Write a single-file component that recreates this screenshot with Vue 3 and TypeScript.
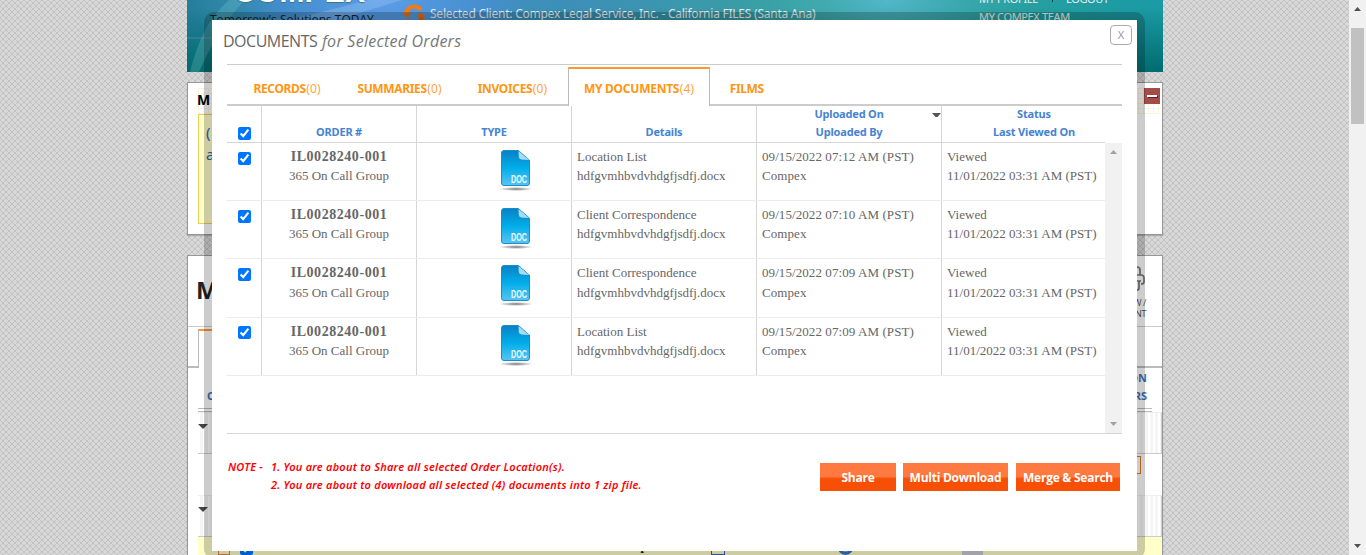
<script setup lang="ts">
import { ref } from 'vue'

interface DocumentRow {
  order: string
  client: string
  kind: string
  file: string
  uploadedOn: string
  uploadedBy: string
  status: string
  viewedOn: string
  selected: boolean
}

const tabs = [
  { label: 'RECORDS', count: '(0)', name: 'records' },
  { label: 'SUMMARIES', count: '(0)', name: 'summaries' },
  { label: 'INVOICES', count: '(0)', name: 'invoices' },
  { label: 'MY DOCUMENTS', count: '(4)', name: 'mine' },
  { label: 'FILMS', count: '', name: 'films' },
]
const activeTab = ref('mine')
const allSelected = ref(true)

const makeRow = (kind: string, time: string): DocumentRow => ({
  order: 'IL0028240-001',
  client: '365 On Call Group',
  kind,
  file: 'hdfgvmhbvdvhdgfjsdfj.docx',
  uploadedOn: `09/15/2022 ${time} AM (PST)`,
  uploadedBy: 'Compex',
  status: 'Viewed',
  viewedOn: '11/01/2022 03:31 AM (PST)',
  selected: true,
})

const rows = ref<DocumentRow[]>([
  makeRow('Location List', '07:12'),
  makeRow('Client Correspondence', '07:10'),
  makeRow('Client Correspondence', '07:09'),
  makeRow('Location List', '07:09'),
])
</script>

<template>
  <div class="screen">
    <div class="viewport">
      <svg class="weave" width="1349" height="555" shape-rendering="crispEdges">
        <defs>
          <pattern id="weave" width="6" height="6" patternUnits="userSpaceOnUse">
            <rect width="6" height="6" fill="#d8d8d8" />
            <path d="M0 0h1v1h-1zM1 1h1v1h-1zM2 2h1v1h-1zM3 3h1v1h-1zM4 4h1v1h-1zM5 5h1v1h-1zM5 0h1v1h-1zM4 1h1v1h-1zM3 2h1v1h-1zM2 3h1v1h-1zM1 4h1v1h-1zM0 5h1v1h-1z" fill="#c2c2c2" />
          </pattern>
        </defs>
        <rect width="1349" height="555" fill="url(#weave)" />
      </svg>
      <div class="site">
        <header class="banner">
          <svg class="banner-art" viewBox="0 0 976 72" preserveAspectRatio="none">
            <defs>
              <radialGradient id="glow" cx="0.5" cy="0.5" r="0.5">
                <stop offset="0" stop-color="#5d9ee8" />
                <stop offset="0.55" stop-color="#4a90d9" stop-opacity="0.75" />
                <stop offset="1" stop-color="#3a9ab5" stop-opacity="0" />
              </radialGradient>
              <radialGradient id="haze" cx="0.5" cy="0.5" r="0.5">
                <stop offset="0" stop-color="#54b7cb" />
                <stop offset="1" stop-color="#3aa5ae" stop-opacity="0" />
              </radialGradient>
            </defs>
            <ellipse cx="195" cy="0" rx="190" ry="90" fill="url(#glow)" />
            <ellipse cx="700" cy="0" rx="150" ry="60" fill="url(#haze)" />
            <path d="M3 72 C12 38 22 18 42 0 L58 0 C38 20 24 45 12 72Z" fill="#7fd0c8" opacity=".25" />
            <path d="M110 18 L182 0 L215 0 L150 20Z" fill="#b9d6fb" opacity=".25" />
            <path d="M0 38 H25" stroke="#6e8fb4" opacity=".6" />
          </svg>
          <div class="brand">
            <div class="logo">COMPEX</div>
            <div class="tagline">Tomorrow's Solutions TODAY</div>
          </div>
          <div class="client">
            <svg width="24" height="24" viewBox="0 0 24 24">
              <path d="M4 10 A8.5 8.5 0 0 1 19 7" fill="none" stroke="#f47a14" stroke-width="4" />
              <path d="M20 14 A8.5 8.5 0 0 1 5 17" fill="none" stroke="#d96205" stroke-width="4" />
              <path d="M0 10 H10 L5 15Z M14 14 H24 L19 9Z" fill="#e66c0b" />
            </svg>
            <span>Selected Client: Compex Legal Service, Inc. - California FILES (Santa Ana)</span>
          </div>
          <nav class="account">
            <div class="account-row"><span>MY PROFILE</span><i></i><span>LOGOUT</span></div>
            <div>MY COMPEX TEAM</div>
          </nav>
        </header>

        <section class="panel notice">
          <div class="notice-head"><b>M</b><span class="collapse"><i></i></span></div>
          <div class="notice-box">(<br />a</div>
        </section>

        <section class="panel orders">
          <div class="orders-head">
            <b>M</b>
            <div class="print">
              <svg width="22" height="26" viewBox="0 0 22 26" fill="none" stroke="#777" stroke-width="1.7">
                <path d="M5 9 V3 Q5 1 7 1 H13 Q16 1 16 4 V9 M5 19 H3 Q1 19 1 17 V11 Q1 9 3 9 H17 Q20 9 20 12 V16 Q20 18 17 18 M5 15 H17 M6 15 V22 Q6 24 8 24 H13 Q15 24 15 22 V15" />
              </svg>
              <span>W /<br />NT</span>
            </div>
          </div>
          <div class="orders-tabs"><i></i></div>
          <div class="orders-cols"><span>O</span><span class="right">ON<br />RS</span></div>
          <div class="group"><i></i></div>
          <div class="group-body"><i></i></div>
          <div class="group"><i></i></div>
          <div class="picked">
            <span class="mini-icon"></span>
            <input type="checkbox" checked />
            <span class="p-no">365</span>
            <b class="p-type">Test</b>
            <b class="p-client">365 On Call Group</b>
            <span class="p-copy"></span>
            <span class="p-ring"></span>
            <span class="p-gray"></span>
          </div>
        </section>
      </div>
    </div>

    <div class="page-scroll">
      <svg width="17" height="28" viewBox="0 0 17 28"><path d="M5 11 L8.5 7 L12 11Z" fill="#505050" /></svg>
      <div class="thumb"></div>
      <svg class="down" width="17" height="17" viewBox="0 0 17 17"><path d="M5 6 L8.5 10 L12 6Z" fill="#505050" /></svg>
    </div>

    <div class="frame">
      <div class="dialog">
        <header class="title-bar">
          <h1>DOCUMENTS <em>for Selected Orders</em></h1>
          <button class="close">X</button>
        </header>

        <div class="content">
          <nav class="tabs">
            <button
              v-for="tab in tabs"
              :key="tab.name"
              :class="['tab', tab.name, { active: activeTab === tab.name }]"
              @click="activeTab = tab.name"
            ><b>{{ tab.label }}</b><span>{{ tab.count }}</span></button>
            <div class="tab-rest"></div>
          </nav>

          <div class="grid head">
            <div class="check"><input v-model="allSelected" type="checkbox" /></div>
            <div><span>ORDER #</span></div>
            <div><span>TYPE</span></div>
            <div><span>Details</span></div>
            <div class="sorted">
              <span>Uploaded On<br />Uploaded By</span>
              <svg width="9" height="6" viewBox="0 0 9 6"><path d="M0 1 H9 L5.5 5 H3.5Z" fill="#555" /></svg>
            </div>
            <div class="status-head"><span>Status<br />Last Viewed On</span></div>
          </div>

          <div class="body">
            <div class="rows">
              <div v-for="(row, i) in rows" :key="i" class="grid row">
                <div class="check"><input v-model="row.selected" type="checkbox" /></div>
                <div class="order"><b>{{ row.order }}</b><span>{{ row.client }}</span></div>
                <div class="type">
                  <svg width="36" height="42" viewBox="0 0 36 42">
                    <defs>
                      <linearGradient id="page" x1="0" y1="0" x2="0" y2="1">
                        <stop offset="0" stop-color="#0a7fc4" />
                        <stop offset="0.5" stop-color="#00aeea" />
                        <stop offset="1" stop-color="#5cc3f2" />
                      </linearGradient>
                      <radialGradient id="shade"><stop offset="0" stop-color="#777" /><stop offset="1" stop-color="#777" stop-opacity="0" /></radialGradient>
                    </defs>
                    <ellipse cx="18" cy="39" rx="17" ry="2" fill="url(#shade)" />
                    <path d="M6 .5 H20.5 L31.5 10 V33 Q31.5 35.5 29 35.5 H6 Q3.5 35.5 3.5 33 V3 Q3.5 .5 6 .5Z" fill="url(#page)" stroke="#168fce" />
                    <path d="M20.5 1 L31 10 Q27 9.5 23.5 9.5 Q21 9 20.8 7Z" fill="#a6dcf5" />
                    <path d="M20.8 0 L32 10 V0Z" fill="#fff" />
                    <text x="13" y="33" textLength="16" lengthAdjust="spacingAndGlyphs" class="doc-label">DOC</text>
                  </svg>
                </div>
                <div class="details"><span>{{ row.kind }}</span><span class="file">{{ row.file }}</span></div>
                <div class="uploaded"><span>{{ row.uploadedOn }}</span><span>{{ row.uploadedBy }}</span></div>
                <div class="status"><span>{{ row.status }}</span><span>{{ row.viewedOn }}</span></div>
              </div>
            </div>
            <div class="list-scroll">
              <svg width="17" height="17" viewBox="0 0 17 17"><path d="M5 11 L8.5 7 L12 11Z" fill="#a3a3a3" /></svg>
              <svg width="17" height="17" viewBox="0 0 17 17"><path d="M5 6 L8.5 10 L12 6Z" fill="#a3a3a3" /></svg>
            </div>
          </div>

          <footer class="footer">
            <div class="note">
              <span class="note-label">NOTE -</span>
              <div><div>1. You are about to Share all selected Order Location(s).</div><div>2. You are about to download all selected (4) documents into 1 zip file.</div></div>
            </div>
            <div class="actions">
              <button class="share">Share</button>
              <button class="multi">Multi Download</button>
              <button class="merge">Merge &amp; Search</button>
            </div>
          </footer>
        </div>
      </div>
    </div>
  </div>
</template>

<style>
body { overflow: hidden; }
</style>

<style scoped>
* { box-sizing: border-box; }
button { border: 0; padding: 0; margin: 0; background: none; font-family: inherit; }
input { width: 13px; height: 13px; margin: 0; display: block; flex: none; }
.screen { position: relative; width: 1366px; height: 555px; overflow: hidden; display: flex; font-family: "Noto Sans", "Open Sans", sans-serif; }
.viewport { position: relative; width: 1349px; height: 555px; overflow: hidden; background: #d0d0d0; }
.weave { position: absolute; inset: 0; }
.site { position: relative; width: 976px; margin-left: 187px; }
.banner { position: relative; height: 72px; overflow: hidden; background: linear-gradient(180deg, rgba(0,110,110,0) 10%, rgba(0,105,108,.9) 95%), linear-gradient(90deg, #257f9c, #3d8fb8 40%, #36a69a 68%, #1a9aa5); }
.banner-art { position: absolute; inset: 0; width: 976px; height: 72px; }
.brand { position: absolute; left: 23px; top: -25px; white-space: nowrap; }
.logo { color: #fff; font: bold 30px/34px "Liberation Sans", sans-serif; height: 36px; letter-spacing: .2px; margin-left: 24px; text-shadow: 0 1px 1px #3b7482; }
.tagline { font: 12px/18px "Open Sans", sans-serif; color: #0c1c28; letter-spacing: 0; }
.client { position: absolute; left: 215px; top: 3px; display: flex; gap: 4px; color: #e2eaec; font-size: 12px; line-height: 22px; white-space: nowrap; letter-spacing: -.24px; }
.account { position: absolute; left: 792px; top: -10px; color: #e7eeee; font-size: 11px; line-height: 18px; letter-spacing: -.35px; white-space: nowrap; }
.account-row { display: flex; }
.account-row i { width: 1px; height: 12px; background: #063b40; margin: 0 13px 0 14px; }
.panel { background: #fff; border: 1px solid #999; box-shadow: 0 1px 1px #aaa; }
.notice { margin-top: 10px; height: 153px; padding: 5px 2px 0 10px; background: #fff; }
.notice-head { display: flex; justify-content: space-between; height: 26px; font: 14px/24px "Noto Sans", sans-serif; color: #000; background: repeating-linear-gradient(0deg, #fdf3df 0 1px, transparent 1px 5px), repeating-linear-gradient(90deg, #fdf3df 0 1px, transparent 1px 5px); }
.notice-head b { margin-left: -1px; }
.collapse { width: 16px; height: 16px; background: #a54c49; padding: 7px 3px; }
.collapse i { display: block; height: 2px; background: #fff; box-shadow: 1px 1px #5b2220; }
.notice-box { width: 500px; height: 110px; background: #ffffc8; border: 1px solid #eecd5c; padding: 6px 7px; color: #2e62aa; font-size: 15px; line-height: 22px; }
.orders { margin-top: 20px; height: 310px; overflow: hidden; }
.orders-head { height: 71px; display: flex; justify-content: space-between; padding: 10px 16px 0 8px; border-bottom: 1px solid #ccc; color: #222; font: 24px/48px "Open Sans", sans-serif; }
.print { width: 22px; font-size: 9px; line-height: 11px; text-align: right; color: #555; letter-spacing: -.4px; white-space: nowrap; }
.print svg { display: block; margin-bottom: 5px; }
.orders-tabs { height: 41px; display: flex; border-bottom: 2px solid #bbb; padding-top: 2px; padding-left: 10px; }
.orders-tabs i { width: 100px; height: 39px; border-top: 2px solid #ff962e; border-left: 1px solid #bbb; background: #fff; }
.orders-cols { height: 44px; margin: 0 10px; border-bottom: 4px double #bbb; display: flex; justify-content: space-between; color: #3b73bd; font: bold 11px/18px "Noto Sans", sans-serif; padding: 0 5px 3px 9px; align-items: flex-end; }
.orders-cols .right { text-align: right; }
.group { height: 42px; margin-left: 10px; border: 1px solid #ccc; border-left: 0; border-top-color: #eee; background: repeating-linear-gradient(90deg, #fff 0 2px, #f5f5f5 2px 5px); padding-top: 11px; }
.group i { display: block; border: 5px solid transparent; border-top-color: #444; width: 0; }
.group-body { height: 41px; padding: 2px 21px; display: flex; justify-content: flex-end; }
.group-body i { width: 16px; height: 18px; border: 1px solid #e27c1b; }
.picked { height: 42px; margin-left: 10px; background: #ffffc8; display: flex; align-items: flex-start; color: #111; font: 12px/19px "Liberation Serif", serif; padding-left: 20px; white-space: nowrap; }
.mini-icon { width: 12px; height: 18px; border: 1px solid #e08b48; margin-right: 10px; }
.picked input { margin-top: 5px; }
.p-no { margin-left: 37px; width: 102px; color: #3567ac; }
.p-type { width: 157px; }
.p-client { width: 162px; }
.p-copy { width: 14px; height: 18px; border: 1px solid #3567ac; margin-right: 112px; }
.p-ring { width: 17px; height: 18px; border: 3px solid #3775c8; border-radius: 50%; margin-right: 108px; background: #8fb0d8; }
.p-gray { width: 21px; height: 20px; background: #cbcbd2; }
.page-scroll { width: 17px; height: 555px; background: #f1f1f1; display: flex; flex-direction: column; align-items: center; }
.thumb { width: 13px; height: 96px; background: #c1c1c1; }
.down { margin-top: auto; }
.frame { position: absolute; left: 204px; top: 12px; width: 941px; height: 547px; border-radius: 10px; padding: 8px; background: rgba(0,0,0,.2); }
.dialog { width: 925px; height: 531px; background: #fff; color: #666; }
.title-bar { height: 44px; display: flex; justify-content: space-between; padding: 5px 5px 0 11px; }
h1 { margin: 0; font: 16px/32px "Open Sans", sans-serif; color: #666; letter-spacing: -.5px; white-space: nowrap; }
h1 em { letter-spacing: .25px; color: #777; margin-left: 1px; }
.close { width: 22px; height: 20px; border: 1px solid #aaa; border-radius: 4px; color: #999; font-size: 11px; line-height: 18px; }
.content { margin: 0 15px; border-top: 1px solid #ccc; }
.tabs { height: 41px; padding-top: 2px; display: flex; }
.tab { height: 39px; border-bottom: 2px solid #ccc; color: #ff9613; font-size: 12px; line-height: 17px; letter-spacing: -.35px; white-space: nowrap; padding-top: 5px; }
.tab span { font-weight: 400; letter-spacing: .1px; margin-left: .5px; opacity: .85; }
.records { width: 120px; }
.summaries { width: 105px; }
.invoices { width: 116px; padding-left: 5px; }
.films { width: 74px; }
.active { width: 142px; border: 1px solid #bbb; border-top: 2px solid #ff962e; border-bottom: 0; padding-top: 2px; letter-spacing: -.25px; }
.tab-rest { flex: 1; border-bottom: 2px solid #ccc; }
.grid { display: grid; grid-template-columns: 35px 155px 155px 185px 185px 1fr; }
.grid > div:not(:last-child) { border-right: 1px solid #d6d6d6; }
.head { height: 37px; grid-template-rows: 36px; margin-right: 17px; border-bottom: 1px solid #d6d6d6; color: #4684d2; font: bold 11px/18px "Noto Sans", sans-serif; text-align: center; letter-spacing: -.18px; }
.head > div { height: 36px; display: flex; justify-content: center; align-items: flex-end; padding-bottom: 1px; }
.head > .check { padding-bottom: 2px; }
.head .sorted { position: relative; }
.sorted svg { position: absolute; right: 0; top: 6px; }
.head .status-head { padding-left: 21px; }
.body { height: 291px; display: flex; border-bottom: 1px solid #d6d6d6; }
.rows { flex: 1; display: grid; grid-template-rows: 58px 58px 59px 58px; align-content: start; }
.row { border-bottom: 1px solid #ececec; font: 13px/19px Georgia, "Liberation Serif", serif; color: #666; white-space: nowrap; }
.row > div { padding: 4px 5px 0; display: flex; flex-direction: column; }
.row > div.check { padding: 9px 0 0 11px; }
.row:last-child > div.check { padding-top: 8px; }
.row > .order { align-items: center; }
.row > .type { padding: 7px 0 0 81px; }
.row:nth-child(3) > .type { padding-top: 6px; }
.order b { font-size: 14px; letter-spacing: .55px; }
.uploaded { letter-spacing: .08px; }
.status { letter-spacing: .01px; }
.row:nth-child(3) span:last-child { margin-top: 1px; }
.doc-label { fill: #e9f9ff; font: bold 10px "Liberation Sans", sans-serif; }
.list-scroll { width: 17px; background: #f1f1f1; display: flex; flex-direction: column; justify-content: space-between; }
.footer { padding: 24px 2px 0 1px; display: flex; justify-content: space-between; align-items: flex-start; }
.note { display: flex; color: #f00; font: italic 600 11px/18px "Noto Sans", sans-serif; white-space: nowrap; letter-spacing: .22px; }
.note-label { width: 43px; }
.actions { display: flex; gap: 7px; padding-top: 5px; }
.actions button { height: 28px; background: linear-gradient(#ff7a40 0 48%, #f75006 56%); color: #fff; font: bold 12px/28px "Open Sans", sans-serif; white-space: nowrap; letter-spacing: -.25px; padding-top: 1px; }
.share { width: 76px; }
.multi { width: 105px; }
.actions .merge { width: 104px; margin-left: 1px; }
</style>
